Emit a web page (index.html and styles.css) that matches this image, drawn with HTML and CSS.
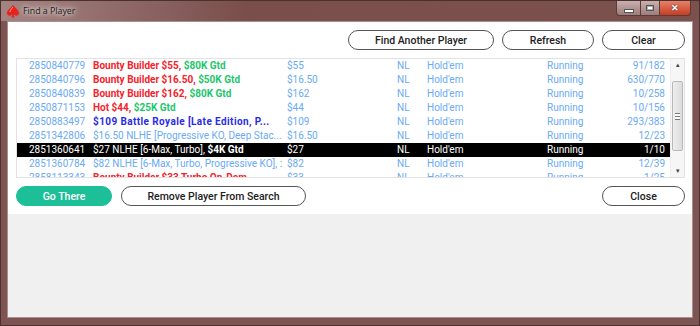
FILE: index.html
```html
<!DOCTYPE html>
<html lang="en">
<head>
    <meta charset="UTF-8">
    <title>Find a Player</title>
    <link rel="stylesheet" href="styles.css">
</head>
<body>
<div class="window">
    <div class="titlebar">
        <svg class="app-icon" width="12" height="13" viewBox="0 0 12 13">
            <path d="M6 0 C4 3 0 5 0 8 C0 10 2 11 3.5 10.5 C4.5 10.2 5.2 9.5 5.5 9 L4.5 12.5 L7.5 12.5 L6.5 9 C6.8 9.5 7.5 10.2 8.5 10.5 C10 11 12 10 12 8 C12 5 8 3 6 0 Z" fill="#e8221c"/>
            <path d="M6 2 C5 3.5 3 5 3 7" stroke="#ff9a8a" stroke-width="1" fill="none"/>
        </svg>
        <span class="title">Find a Player</span>
        <div class="controls">
            <span class="ctl min"><i></i></span>
            <span class="ctl max"><i></i></span>
            <span class="ctl close">&#x2715;</span>
        </div>
    </div>

    <div class="client">
        <div class="panel">
            <div class="toolbar">
                <button class="btn wide">Find Another Player</button>
                <button class="btn">Refresh</button>
                <button class="btn small">Clear</button>
            </div>

            <div class="listbox">
                <div class="rows">
                    <div class="row">
                        <span>2850840779</span>
                        <span class="name"><b class="red">Bounty Builder $55, </b><b class="green">$80K Gtd</b></span>
                        <span>$55</span><span>NL</span><span>Hold'em</span><span>Running</span>
                        <span class="num">91/182</span>
                    </div>
                    <div class="row">
                        <span>2850840796</span>
                        <span class="name"><b class="red">Bounty Builder $16.50, </b><b class="green">$50K Gtd</b></span>
                        <span>$16.50</span><span>NL</span><span>Hold'em</span><span>Running</span>
                        <span class="num">630/770</span>
                    </div>
                    <div class="row">
                        <span>2850840839</span>
                        <span class="name"><b class="red">Bounty Builder $162, </b><b class="green">$80K Gtd</b></span>
                        <span>$162</span><span>NL</span><span>Hold'em</span><span>Running</span>
                        <span class="num">10/258</span>
                    </div>
                    <div class="row">
                        <span>2850871153</span>
                        <span class="name"><b class="red">Hot $44, </b><b class="green">$25K Gtd</b></span>
                        <span>$44</span><span>NL</span><span>Hold'em</span><span>Running</span>
                        <span class="num">10/156</span>
                    </div>
                    <div class="row">
                        <span>2850883497</span>
                        <span class="name"><b class="blue wide-b">$109 Battle Royale [Late Edition, P...</b></span>
                        <span>$109</span><span>NL</span><span>Hold'em</span><span>Running</span>
                        <span class="num">293/383</span>
                    </div>
                    <div class="row">
                        <span>2851342806</span>
                        <span class="name">$16.50 NLHE [Progressive KO, Deep Stac...</span>
                        <span>$16.50</span><span>NL</span><span>Hold'em</span><span>Running</span>
                        <span class="num">12/23</span>
                    </div>
                    <div class="row selected">
                        <span>2851360641</span>
                        <span class="name">$27 NLHE [6-Max, Turbo], <b>$4K Gtd</b></span>
                        <span>$27</span><span>NL</span><span>Hold'em</span><span>Running</span>
                        <span class="num">1/10</span>
                    </div>
                    <div class="row">
                        <span>2851360784</span>
                        <span class="name">$82 NLHE [6-Max, Turbo, Progressive KO], <span class="green">:</span></span>
                        <span>$82</span><span>NL</span><span>Hold'em</span><span>Running</span>
                        <span class="num">12/39</span>
                    </div>
                    <div class="row">
                        <span>2858113343</span>
                        <span class="name"><b class="red">Bounty Builder $33 Turbo On-Dem...</b></span>
                        <span>$33</span><span>NL</span><span>Hold'em</span><span>Running</span>
                        <span class="num">1/25</span>
                    </div>
                </div>
                <div class="scrollbar">
                    <span class="arrow">&#9652;</span>
                    <div class="track"><div class="thumb"><i></i></div></div>
                    <span class="arrow">&#9662;</span>
                </div>
            </div>

            <div class="actions">
                <button class="btn primary">Go There</button>
                <button class="btn remove">Remove Player From Search</button>
                <span class="spacer"></span>
                <button class="btn small">Close</button>
            </div>
        </div>
        <div class="empty"></div>
    </div>
</div>
</body>
</html>
```

FILE: styles.css
```css
body { margin: 0; font-family: Roboto, "Liberation Sans", sans-serif; }

.window { width: 700px; height: 326px; box-sizing: border-box; display: flex; flex-direction: column; background: #7d5452; padding: 0 6px 7px 6px; border: 1px solid #4a3130; }
.titlebar { height: 20px; display: flex; align-items: center; position: relative; background: linear-gradient(90deg, #a48482 0%, #7a4e4b 35%, #7b514e 100%); margin: 0 -6px; padding: 0 0 0 6px; }
.app-icon { margin-right: 4px; }
.title { font-family: "Open Sans", "Noto Sans", sans-serif; font-size: 8.8px; color: #1a1a1a; text-shadow: 0 0 8px #fff, 0 0 4px #fff; }
.controls { position: absolute; right: 8px; top: 0; display: flex; }
.ctl { height: 14px; border: 1px solid #5a3b39; border-top: none; display: flex; align-items: center; justify-content: center; background: linear-gradient(#c9b0ae, #9c7d7b); }
.ctl.min { width: 23px; border-radius: 0 0 0 4px; }
.ctl.min i { width: 8px; height: 2px; background: #fff; border: 1px solid #555; margin-top: 5px; }
.ctl.max { width: 18px; border-left: none; }
.ctl.max i { width: 6px; height: 4px; border: 1px solid #555; background: #fff; box-shadow: inset 0 0 0 1px #aaa; }
.ctl.close { width: 30px; border-left: none; border-radius: 0 0 4px 0; background: linear-gradient(#e6826a, #c63d22); color: #fff; font-size: 9px; font-weight: bold; text-shadow: 0 0 2px #333; }

.client { flex: 1; display: flex; flex-direction: column; border: 1px solid #a8908e; background: #f0f0f0; }
.panel { background: #fff; padding: 8px 7px 8px 8px; }

.toolbar { display: flex; justify-content: flex-end; gap: 8px; }
.btn { font-family: Roboto, "Liberation Sans", sans-serif; font-size: 10.5px; font-weight: 500; color: #222; background: #fff; border: 1px solid #555; border-radius: 10px; height: 20px; width: 92px; padding: 0; }
.btn.wide { width: 146px; }
.btn.small { width: 83px; }
.btn.primary { width: 96px; background: #1dbf98; border-color: #1dbf98; color: #fff; }
.btn.remove { width: 185px; }
.actions { display: flex; gap: 9px; margin-top: 8px; }
.spacer { flex: 1; }

.listbox { margin-top: 8px; height: 118px; border: 1px solid #e2e2e2; display: flex; overflow: hidden; }
.rows { flex: 1; overflow: hidden; }
.row { display: grid; grid-template-columns: 64px 194px 110px 30px 120px 70px 48px; height: 14px; line-height: 14px; padding-left: 12px; font-size: 10px; color: #6aaaf6; white-space: nowrap; }
.row span { overflow: hidden; }
.row .num { text-align: right; }
.row.selected { background: #000; color: #fff; }
.row b { font-weight: bold; }
.row b.wide-b { letter-spacing: 0.4px; }
.red { color: #f5222c; }
.green { color: #1dc66d; }
.blue { color: #2a2ae8; }

.scrollbar { width: 13px; border-left: 1px solid #eee; display: flex; flex-direction: column; align-items: center; background: #f6f6f6; }
.arrow { font-size: 7px; color: #444; height: 12px; line-height: 12px; }
.track { flex: 1; width: 100%; padding: 10px 0 16px; box-sizing: border-box; }
.thumb { height: 100%; margin: 0 1px; border: 1px solid #b8b8b8; border-radius: 2px; background: linear-gradient(90deg, #eee, #dcdcdc); display: flex; align-items: center; justify-content: center; }
.thumb i { width: 5px; height: 5px; border-top: 1px solid #777; border-bottom: 1px solid #777; background: linear-gradient(#fff 40%, #777 40%, #777 60%, #fff 60%); }

.empty { flex: 1; }
```
